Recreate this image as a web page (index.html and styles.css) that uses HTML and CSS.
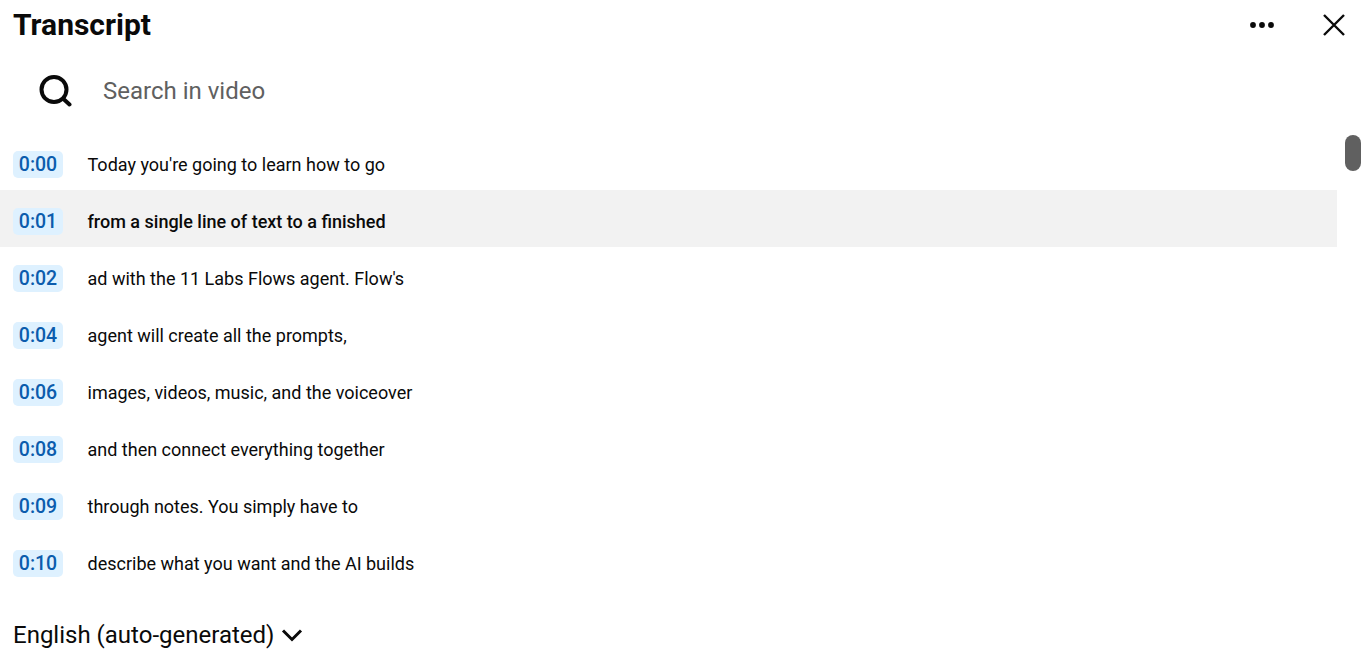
FILE: index.html
```html
<!DOCTYPE html>
<html lang="en">
<head>
    <meta charset="UTF-8">
    <meta name="viewport" content="width=device-width, initial-scale=1.0">
    <title>Transcript</title>
    <link rel="stylesheet" href="styles.css">
</head>
<body>
    <div class="panel">
        <div class="panel-header">
            <h1 class="panel-title">Transcript</h1>
            <div class="panel-actions">
                <svg class="icon-more" width="26" height="6" viewBox="0 0 26 6"><circle cx="4" cy="3" r="2.9"/><circle cx="13" cy="3" r="2.9"/><circle cx="22" cy="3" r="2.9"/></svg>
                <svg class="icon-close" width="24" height="24" viewBox="0 0 24 24"><path d="M2 2L22 22M22 2L2 22"/></svg>
            </div>
        </div>
        <div class="search-row">
            <svg class="icon-search" width="34" height="34" viewBox="0 0 34 34"><circle cx="16" cy="15.5" r="12.5"/><path d="M25.5 25L31.5 30.5"/></svg>
            <span class="search-text">Search in video</span>
        </div>
        <div class="transcript-list">
            <div class="line"><span class="time">0:00</span><span class="line-text">Today you're going to learn how to go</span></div>
            <div class="line active"><span class="time">0:01</span><span class="line-text">from a single line of text to a finished</span></div>
            <div class="line"><span class="time">0:02</span><span class="line-text">ad with the 11 Labs Flows agent. Flow's</span></div>
            <div class="line"><span class="time">0:04</span><span class="line-text">agent will create all the prompts,</span></div>
            <div class="line"><span class="time">0:06</span><span class="line-text">images, videos, music, and the voiceover</span></div>
            <div class="line"><span class="time">0:08</span><span class="line-text">and then connect everything together</span></div>
            <div class="line"><span class="time">0:09</span><span class="line-text">through notes. You simply have to</span></div>
            <div class="line"><span class="time">0:10</span><span class="line-text">describe what you want and the AI builds</span></div>
            <div class="scroll-thumb"></div>
        </div>
        <div class="panel-footer">
            <span>English (auto-generated)</span>
            <svg class="icon-chevron" width="22" height="14" viewBox="0 0 22 14"><path d="M2 2.5L11 11.5L20 2.5"/></svg>
        </div>
    </div>
</body>
</html>
```

FILE: styles.css
```css
* {
    box-sizing: border-box;
    margin: 0;
    padding: 0;
}
body {
    font-family: Roboto, sans-serif;
    background-color: #fff;
    color: #0a0a0a;
    overflow: hidden;
}
.panel {
    width: 1362px;
    height: 660px;
    display: flex;
    flex-direction: column;
}
.panel-header {
    height: 50px;
    display: flex;
    align-items: center;
    justify-content: space-between;
    padding: 0 16px 0 13px;
}
.panel-title {
    font-size: 30px;
    font-weight: 700;
    line-height: 50px;
}
.panel-actions {
    display: flex;
    align-items: center;
    gap: 47px;
}
.icon-more {
    fill: #0a0a0a;
}
.icon-close {
    fill: none;
    stroke: #0a0a0a;
    stroke-width: 2.4;
}
.search-row {
    height: 83px;
    display: flex;
    align-items: center;
    padding: 0 0 0 38px;
    gap: 31px;
    padding-bottom: 1px;
}
.icon-search {
    fill: none;
    stroke: #0a0a0a;
    stroke-width: 4;
    stroke-linecap: round;
}
.search-text {
    font-size: 24px;
    color: #606060;
}
.transcript-list {
    position: relative;
    display: flex;
    flex-direction: column;
}
.line {
    width: 1337px;
    height: 57px;
    display: flex;
    align-items: center;
    padding-top: 6px;
    padding-left: 13px;
}
.line.active {
    background-color: #f2f2f2;
}
.line.active .line-text {
    font-weight: 500;
}
.time {
    width: 50px;
    height: 27px;
    line-height: 28px;
    border-radius: 5px;
    background-color: #def1ff;
    color: #0b5cad;
    font-size: 19.5px;
    font-weight: 500;
    text-align: center;
}
.line-text {
    margin-left: 24.5px;
    font-size: 18px;
}
.scroll-thumb {
    position: absolute;
    top: 2px;
    left: 1345px;
    width: 16px;
    height: 36px;
    border-radius: 8px;
    background-color: #606060;
}
.panel-footer {
    display: flex;
    align-items: center;
    gap: 7px;
    height: 50px;
    padding-left: 13px;
    margin-top: 21px;
    font-size: 24px;
}
.icon-chevron {
    fill: none;
    stroke: #0a0a0a;
    stroke-width: 3;
}
```
